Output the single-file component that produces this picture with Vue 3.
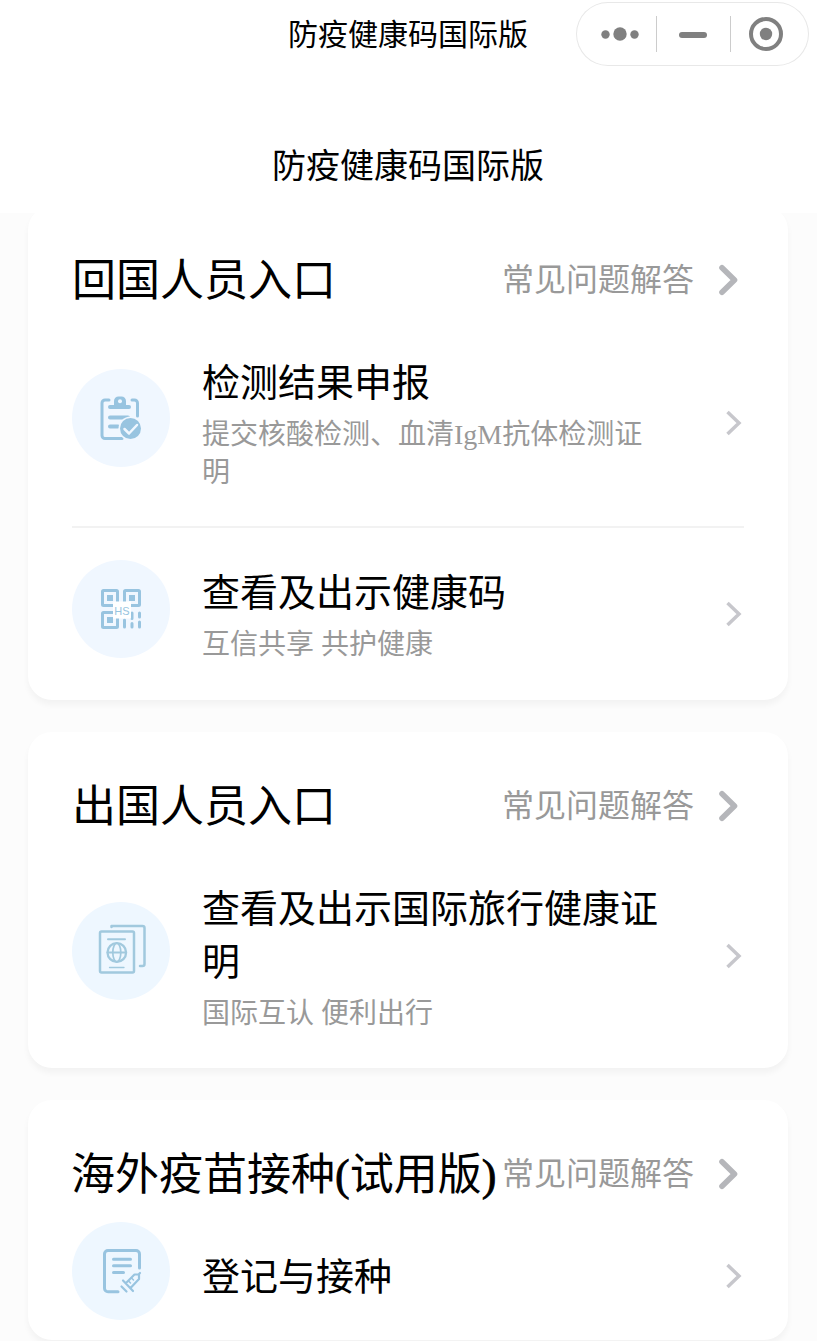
<template>
  <div class="page">
    <header class="header">
      <div class="nav-title">防疫健康码国际版</div>
      <div class="capsule">
        <svg width="232" height="64" viewBox="0 0 232 64" fill="#808080">
          <circle cx="29.5" cy="32.5" r="4.2" />
          <circle cx="44" cy="32" r="6.7" />
          <circle cx="58.5" cy="32.5" r="4.2" />
          <path d="M80.5 14v36M154.500 14v36" stroke="#ccc" />
          <rect x="103" y="30" width="28" height="6" rx="3" />
          <circle cx="190" cy="32" r="15" fill="none" stroke="#808080" stroke-width="4" />
          <circle cx="190" cy="32" r="6.200" />
        </svg>
      </div>
      <h1 class="page-title">防疫健康码国际版</h1>
    </header>

    <main class="content">
      <section v-for="card in cards" :key="card.title" class="card" :class="{ compact: card.compact }">
        <div class="card-head">
          <h2 class="card-title">{{ card.title }}<template v-if="card.note"><span class="paren">(</span>{{ card.note }}<span class="paren">)</span></template></h2>
          <a class="faq">
            <span>常见问题解答</span>
            <svg width="22" height="34" viewBox="0 0 22 34" fill="none" stroke="#b5b6ba" stroke-width="5.600" stroke-linecap="round" stroke-linejoin="round">
              <path d="M4 4.700L16.500 17 4 29.300" />
            </svg>
          </a>
        </div>

        <div v-for="item in card.items" :key="item.title" class="row">
          <div class="icon" :class="item.icon">
            <svg v-if="item.icon === 'report'" width="98" height="98" viewBox="0 0 98 98" fill="none" stroke="#98c4e0" stroke-width="3" stroke-linecap="round" stroke-linejoin="round">
              <path d="M37 31h-4a3 3 0 0 0-3 3v32.500a3 3 0 0 0 3 3h17M60 31h2.500a3 3 0 0 1 3 3V47" />
              <path d="M38 38h19M38 48.500h18M38 57.500h8" stroke-width="4" />
              <path d="M43.500 37v-5a3 3 0 0 1 3-3h3a3 3 0 0 1 3 3v5z" fill="#98c4e0" />
              <circle cx="48" cy="32.300" r="2" fill="#f0f7ff" stroke="none" />
              <circle cx="58.500" cy="59.500" r="12" fill="#f0f7ff" stroke="none" />
              <circle cx="58.500" cy="59.500" r="10.500" fill="#98c4e0" stroke="none" />
              <path d="M52.500 60l4.500 4.500 8-8.500" stroke="#f0f7ff" stroke-width="2.500" />
            </svg>

            <svg v-else-if="item.icon === 'code'" width="98" height="98" viewBox="0 0 98 98" fill="none" stroke="#98c4e0" stroke-width="3">
              <rect x="30.500" y="30.500" width="15" height="15" rx="1" />
              <rect x="52.500" y="30.500" width="15" height="15" rx="1" />
              <rect x="30.500" y="52.500" width="15" height="15" rx="1" />
              <path d="M35 38h6M57 38h6M35 60h6" stroke-width="6" />
              <path d="M52.500 60v7M60 53v5.500M60 63.500V67M67.500 53v4M67.500 62v5" stroke-linecap="round" />
              <rect x="41" y="41.500" width="18" height="17" fill="#fff" stroke="none" />
              <text x="50" y="54.500" class="hs">HS</text>
            </svg>

            <svg v-else-if="item.icon === 'passport'" width="98" height="98" viewBox="0 0 98 98" fill="none" stroke="#a1c9de" stroke-width="2.500" stroke-linecap="round" stroke-linejoin="round">
              <path d="M39.500 25v-1h31a2 2 0 0 1 2 2v36a2 2 0 0 1-2 2H68" />
              <rect x="28" y="29.500" width="34" height="41" rx="1.500" />
              <path d="M36 37.200h17" stroke-width="2" />
              <path d="M37.500 65.500H52" stroke-width="1.300" />
              <circle cx="44.800" cy="50.500" r="9.300" stroke-width="2.300" />
              <ellipse cx="44.800" cy="50.500" rx="4" ry="9.300" stroke-width="1.700" />
              <path d="M35.500 50.500H54" stroke-width="1.800" />
            </svg>

            <svg v-else width="98" height="98" viewBox="0 0 98 98" fill="none" stroke="#98c4e0" stroke-width="3" stroke-linecap="round" stroke-linejoin="round">
              <path d="M46 69.800H36a3.500 3.500 0 0 1-3.500-3.500V32a3.500 3.500 0 0 1 3.500-3.500h28a3.500 3.500 0 0 1 3.500 3.500v14" />
              <path d="M41.500 37.200h17M41.500 43.800h17M41.500 50.500h10" />
              <g stroke-width="2.200">
                <path d="M51 58.500l10 10.500M49.500 64.500l5 5M54 61l8.500-8.500h4.500v4.500L58.500 66M66.500 52.500l1.500-1.500" />
                <path d="M56.500 59l2 2M59.500 56l2 2" stroke-width="1.500" />
              </g>
            </svg>
          </div>

          <div class="text">
            <div class="item-title">{{ item.title }}</div>
            <div v-if="item.desc" class="item-desc">{{ item.desc }}</div>
          </div>

          <svg class="arrow" width="20" height="28" viewBox="0 0 20 28" fill="none" stroke="#c7c7cc" stroke-width="3.500">
            <path d="M3.500 3L15 14 3.500 25" />
          </svg>
        </div>
      </section>
    </main>
  </div>
</template>

<script setup>
const cards = [
  {
    title: "回国人员入口",
    items: [
      { icon: "report", title: "检测结果申报", desc: "提交核酸检测、血清IgM抗体检测证明" },
      { icon: "code", title: "查看及出示健康码", desc: "互信共享 共护健康" }
    ]
  },
  {
    title: "出国人员入口",
    items: [
      { icon: "passport", title: "查看及出示国际旅行健康证明", desc: "国际互认 便利出行" }
    ]
  },
  {
    title: "海外疫苗接种",
    note: "试用版",
    compact: true,
    items: [{ icon: "vaccine", title: "登记与接种" }]
  }
];
</script>

<style>
body {
  margin: 0;
  background: #fcfcfc;
}
</style>

<style scoped>
* {
  box-sizing: border-box;
}

.page {
  height: 1341px;
  overflow: hidden;
  background: #fcfcfc;
  color: #000;
  font-family: "Liberation Serif", "Noto Sans CJK SC", serif;
}

.header {
  position: relative;
  z-index: 1;
  height: 213px;
  padding: 1px 1px 0 0;
  background: #fff;
  text-align: center;
}

.nav-title {
  height: 68px;
  font-size: 30px;
  line-height: 68px;
}

.capsule {
  position: absolute;
  top: 2px;
  right: 8px;
  width: 233px;
  height: 64px;
  border-radius: 32px;
  box-shadow: inset 0 0 0 1px #e8e8e8;
}

.capsule svg {
  display: block;
}

.page-title {
  margin: 64px 0 0;
  font-size: 34px;
  font-weight: 400;
  line-height: 68px;
}

.content {
  display: flex;
  flex-direction: column;
  gap: 32px;
  margin-top: -7px;
  padding: 0 29px 0 28px;
}

.card {
  padding: 0 44px 1px;
  border-radius: 24px;
  background: #fff;
  box-shadow: 0 5px 6px rgba(0, 0, 0, 0.04);
}

.card-head {
  display: flex;
  align-items: center;
  justify-content: space-between;
  height: 113px;
  padding-top: 35px;
}

.card-title {
  margin: 4px 0 0;
  font-size: 44px;
  font-weight: 400;
  line-height: 80px;
  white-space: nowrap;
}

.paren {
  -webkit-text-stroke: 0.8px #000;
}

.faq {
  display: flex;
  align-items: center;
  gap: 24px;
  padding-right: 4px;
  color: #999;
  font-size: 32px;
  line-height: 80px;
  white-space: nowrap;
}

.row {
  display: flex;
  align-items: center;
  padding: 36px 0;
}

.row + .row {
  min-height: 173px;
  padding: 30px 0;
  border-top: 2px solid #f2f2f2;
}

.compact {
  padding-bottom: 0;
}

.compact .card-head {
  height: 112px;
  padding-top: 36px;
}

.compact .card-title {
  margin-left: -1px;
}

.compact .row {
  height: 128px;
  padding: 0;
}

.icon {
  flex: none;
  width: 98px;
  height: 98px;
  margin: 0 32px 10px 0;
  border-radius: 50%;
  background: #f0f7ff;
}

.icon.passport,
.icon.vaccine {
  background: #eef7ff;
}

.icon svg {
  display: block;
}

.hs {
  fill: #98c4e0;
  stroke: none;
  font: 11px "Liberation Sans", sans-serif;
  text-anchor: middle;
}

.text {
  width: 460px;
  padding-top: 2px;
}

.item-title {
  font-size: 38px;
  line-height: 53px;
}

.item-desc {
  margin: 6px 0 -2px;
  color: #999;
  font-size: 28px;
  line-height: 38px;
}

.arrow {
  margin-left: auto;
}
</style>
